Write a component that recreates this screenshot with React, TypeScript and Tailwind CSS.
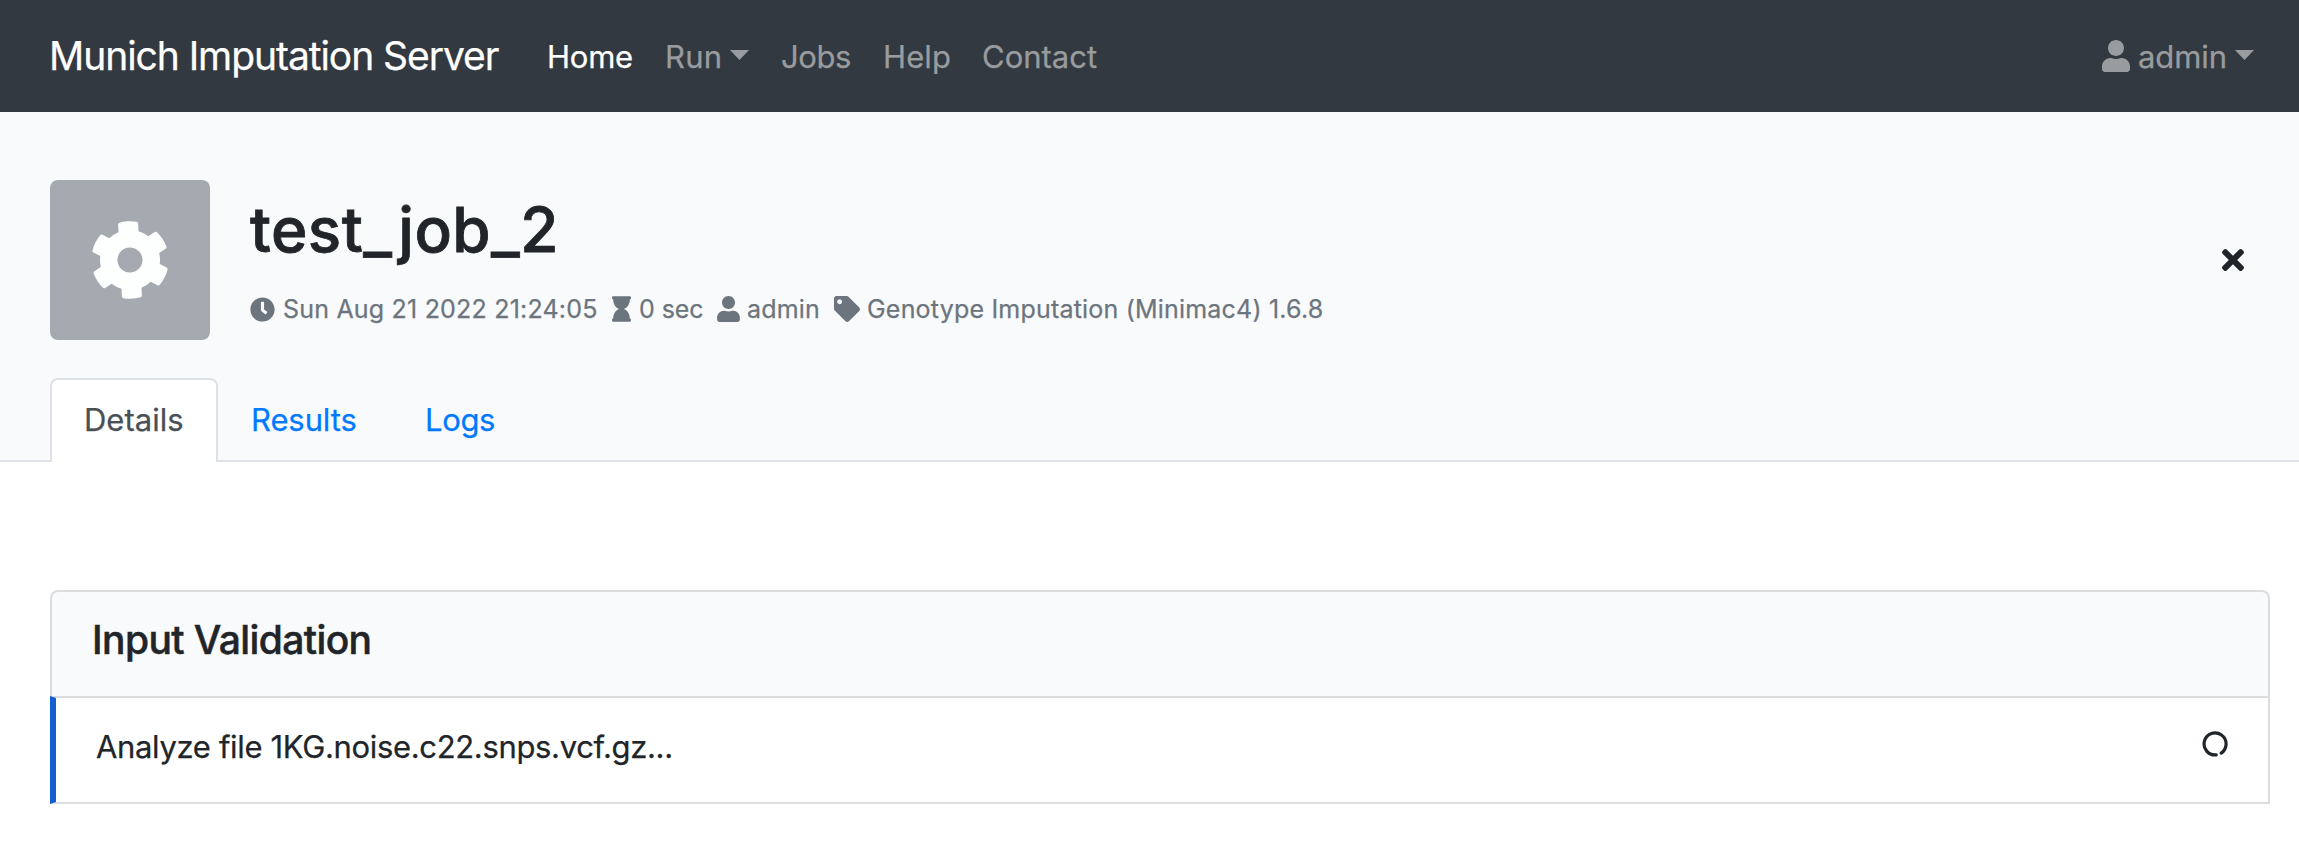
import React from "react";
import { FaClock, FaCog, FaHourglass, FaTag, FaTimes, FaUser } from "react-icons/fa";

function Caret({ className }: { className: string }) {
  return (
    <svg viewBox="0 0 19 10" className={`h-[10px] w-[19px] shrink-0 ${className}`} fill="currentColor">
      <path d="M0 0h19L9.5 10z" />
    </svg>
  );
}

function Navbar() {
  return (
    <nav className="flex h-28 items-center bg-[#333940] pr-[45px] pl-[49px] text-[31px] leading-[48px] text-[#999c9f]">
      <span className="w-[498px] text-[39px] leading-[60px] tracking-[-1.06px] text-white">
        Munich Imputation Server
      </span>
      <a className="w-[118px] pt-px tracking-[-0.25px] text-white">Home</a>
      <a className="flex w-[116px] items-center pt-px">
        <span className="w-[65px] tracking-[0.2px]">Run</span>
        <Caret className="-mt-[4px]" />
      </a>
      <a className="w-[102px] pt-px tracking-[-0.4px]">Jobs</a>
      <a className="w-[99px] pt-px tracking-[0.1px]">Help</a>
      <a className="pt-px">Contact</a>
      <a className="ml-auto flex items-center pt-px">
        <FaUser className="-mt-px mr-[8px] h-8 w-7" />
        <span className="w-[97px] tracking-[-0.1px]">admin</span>
        <Caret className="-mt-[4px]" />
      </a>
    </nav>
  );
}

function JobHeader() {
  return (
    <header className="border-b-2 border-[#dee2e6] bg-[#f9fafc] pt-[68px] pl-[50px]">
      <div className="flex h-40">
        <div className="flex size-40 items-center justify-center rounded-lg bg-[#a5a9b0]">
          <FaCog className="size-20 -rotate-3 text-[#fdfefe]" />
        </div>
        <div className="pt-[11px] pl-[40px]">
          <h1 className="h-[77px] text-[62px] leading-[77px] font-medium tracking-[0.45px] [-webkit-text-stroke:0.8px]">
            test_job_2
          </h1>
          <div className="mt-[22px] flex h-[38px] items-center text-[25px] leading-[38px] whitespace-nowrap text-[#6c757d]">
            <FaClock className="size-[25px]" />
            <span className="ml-[8px] w-[329px] tracking-[0.2px]">Sun Aug 21 2022 21:24:05</span>
            <FaHourglass className="h-[26px] w-[19px]" />
            <span className="ml-[8px] w-[78px] tracking-[-0.05px]">0 sec</span>
            <FaUser className="h-[26px] w-[23px]" />
            <span className="ml-[7px] w-[87px] tracking-[0.15px]">admin</span>
            <FaTag className="size-[26px]" />
            <span className="ml-[7px] tracking-[0.2px]">Genotype Imputation (Minimac4) 1.6.8</span>
          </div>
        </div>
        <button className="mt-[69px] mr-[55px] ml-auto flex size-[22px] items-center justify-center">
          <FaTimes className="h-8 w-[22px] shrink-0" />
        </button>
      </div>
      <div className="mt-[38px] -mb-[2px] flex h-[84px] text-[31px] leading-[48px] text-[#007bff]">
        <a className="w-[168px] rounded-t-lg border-2 border-b-0 border-[#dee2e6] bg-white pt-4 pl-[32px] text-[#495057]">
          Details
        </a>
        <a className="w-[174px] pt-[18px] pl-[33px] tracking-[-0.1px]">Results</a>
        <a className="pt-[18px] pl-[33px] tracking-[-0.35px]">Logs</a>
      </div>
    </header>
  );
}

function Spinner() {
  return (
    <svg viewBox="0 0 26 26" className="mt-[8px] size-[26px]" fill="none" stroke="currentColor" strokeWidth="3.2" strokeLinecap="round">
      <path d="M14.2 23.9A11 11 0 1 1 19.2 22.1" />
    </svg>
  );
}

export default function App() {
  return (
    <div className="min-h-[847px] bg-white font-['Inter',sans-serif] text-[#212529] [-webkit-text-stroke:0.25px]">
      <Navbar />
      <JobHeader />
      <main className="pt-32 pr-[29px] pl-[50px]">
        <section>
          <div className="h-[106px] rounded-t-lg border-2 border-b-0 border-[#dcdddf] bg-[#f9fafc] pt-6 pl-[40px]">
            <h2 className="text-[39px] leading-[48px] font-medium tracking-[-0.6px] [-webkit-text-stroke:0.5px]">
              Input Validation
            </h2>
          </div>
          <div className="flex h-[108px] justify-between border-2 border-l-[6px] border-[#dcdddf] border-l-[#155fcf] pt-[25px] pr-[40px] pl-[40px] text-[31px] leading-[48px]">
            <span className="tracking-[-0.34px]">Analyze file 1KG.noise.c22.snps.vcf.gz...</span>
            <Spinner />
          </div>
        </section>
      </main>
    </div>
  );
}
